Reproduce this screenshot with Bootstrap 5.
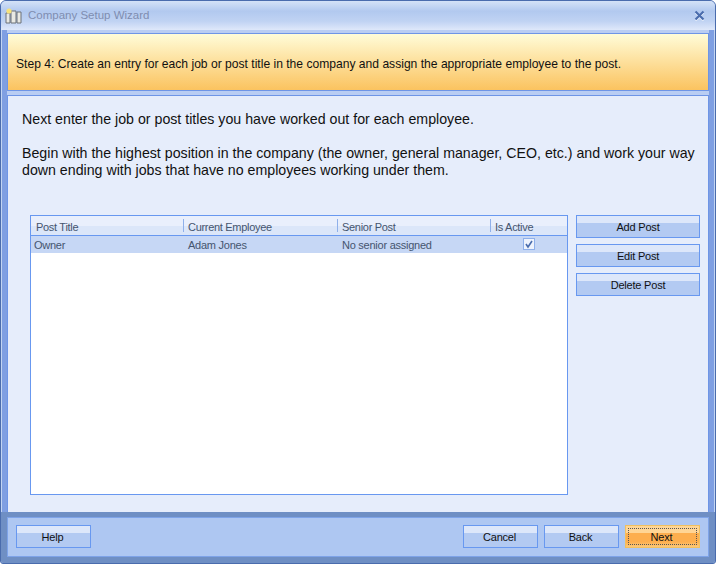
<!DOCTYPE html>
<html><head><meta charset="utf-8">
<link href="https://cdn.jsdelivr.net/npm/bootstrap@5.3.0/dist/css/bootstrap.min.css" rel="stylesheet">
<style>
html,body{margin:0;width:716px;height:564px;overflow:hidden;background:#fff}
body{font-family:"Liberation Sans",Arial,sans-serif;font-size:12px;color:#000}
.wiz-win{width:716px;height:564px;background:#7f9fe2;border:1px solid #4a6cad;border-radius:6px 6px 3px 3px;box-shadow:inset 1px 0 0 #c3d5f2, inset -1px 0 0 #c3d5f2;overflow:hidden;padding:0}
.wiz-title{height:29px;flex:none;background:linear-gradient(#d4e2f7 0,#b2c9ef 35%,#c0d3f3 70%,#dfe8fa 100%);padding:0 10px 0 4px;color:#7f8db0;font-size:11.5px;gap:6px}
.wiz-body{flex:1;background:#b9cdf3;padding:3px 0 0;min-height:0;margin:0 6px}
.wiz-step{height:58px;flex:none;background:linear-gradient(#fffcd8,#fbc35f);border:1px solid #6e95e6;padding:5px 0 0 8px;font-size:12.1px;margin-bottom:4px;color:#111}
.wiz-main{flex:1;background:#e6edfb;border:1px solid #6e95e6;border-bottom:0;padding:15px 8px 0 14px;font-size:14.2px;line-height:17px;min-height:0;color:#111}
.wiz-main p{margin:0 0 17px}
.wiz-grid{margin:19px 0 17px 8px;gap:8px;flex:1;min-height:0}
.wiz-list{width:538px;flex:none;background:#fff;border:1px solid #6898f0}
.wiz-head{height:20px;background:linear-gradient(#e9effc 0 50%,#dbe6f9 50%);border-bottom:1px solid #6898f0;font-size:11px;letter-spacing:-.3px;color:#45556f;line-height:22px}
.wiz-cell{padding-left:5px;white-space:nowrap}
.wiz-head .wiz-cell+.wiz-cell{background:linear-gradient(#8fb0ea,#8fb0ea) left 3px/1px 13px no-repeat}
.c1{width:152px}.c2{width:154px}.c3{width:153px}.c4{flex:1}
.wiz-row{height:17px;background:#c6d7f5;font-size:11px;letter-spacing:-.25px;color:#45556f;line-height:18px}
.wiz-row .wiz-cell{padding-left:3px}
.wiz-row .wiz-cell.c2,.wiz-row .wiz-cell.c3{padding-left:5px}
.wiz-check{width:12px;height:12px;background:#eef3fd;border:1px solid #8fb0ea;margin:2px 0 0 30px}
.wiz-check svg{display:block}
.wiz-btns{width:124px;flex:none;gap:6px}
.wiz-btn{display:block;width:100%;height:23px;padding:0;border:1px solid #6898f0;border-radius:0;background:linear-gradient(#dde7fa 0 35%,#b3caf2 35%);font-size:11px;letter-spacing:-.2px;line-height:22px;color:#111;text-align:center}
.wiz-foot{height:51px;flex:none;background:#6f8fc4;padding:5px 6px 6px}
.wiz-foot-in{height:100%;background:#aec7f2;border:1px solid #7ea3e8;padding:7px 8px;gap:6px}
.wiz-foot .wiz-btn{width:75px;padding-right:2px}
.wiz-next{position:relative;border-color:#f0c060;background:linear-gradient(#ffd595 0 35%,#fdae4e 35% 75%,#fcc878)}
.wiz-next::after{content:"";position:absolute;inset:2px;border:1px dotted #555}
</style></head><body>
<div class="wiz-win d-flex flex-column">
<div class="wiz-title d-flex align-items-center">
<svg width="17" height="17" viewBox="0 0 17 17"><path d="M1 6h4v10H1zM6 4h5v12H6zM12 5h4v11h-4z" fill="#e9e9e4" stroke="#6b7078"/><circle cx="4" cy="4" r="2.6" fill="#f7e27a"/></svg>
<span class="flex-grow-1">Company Setup Wizard</span>
<svg width="11" height="12" viewBox="0 0 11 12"><path d="M1.5 2.5l8 8M9.5 2.5l-8 8" stroke="#eef3fd" stroke-width="2.2"/><path d="M1.5 1.5l8 8M9.5 1.5l-8 8" stroke="#4a6cad" stroke-width="2.2"/></svg>
</div>
<div class="wiz-body d-flex flex-column">
<div class="wiz-step d-flex align-items-center">Step 4: Create an entry for each job or post title in the company and assign the appropriate employee to the post.</div>
<div class="wiz-main d-flex flex-column">
<p>Next enter the job or post titles you have worked out for each employee.</p>
<p>Begin with the highest position in the company (the owner, general manager, CEO, etc.) and work your way down ending with jobs that have no employees working under them.</p>
<div class="wiz-grid d-flex">
<div class="wiz-list">
<div class="wiz-head d-flex"><div class="wiz-cell c1">Post Title</div><div class="wiz-cell c2">Current Employee</div><div class="wiz-cell c3">Senior Post</div><div class="wiz-cell c4">Is Active</div></div>
<div class="wiz-row d-flex"><div class="wiz-cell c1">Owner</div><div class="wiz-cell c2">Adam Jones</div><div class="wiz-cell c3">No senior assigned</div><div class="wiz-cell c4"><div class="wiz-check"><svg width="10" height="10" viewBox="0 0 10 10"><path d="M2 5l2 3 4-6" fill="none" stroke="#4a6cad" stroke-width="1.6"/></svg></div></div></div>
</div>
<div class="wiz-btns d-flex flex-column">
<button class="wiz-btn">Add Post</button><button class="wiz-btn">Edit Post</button><button class="wiz-btn">Delete Post</button>
</div>
</div>
</div>
</div>
<div class="wiz-foot"><div class="wiz-foot-in d-flex">
<button class="wiz-btn me-auto">Help</button><button class="wiz-btn">Cancel</button><button class="wiz-btn">Back</button><button class="wiz-btn wiz-next">Next</button>
</div></div>
</div>
</body></html>
